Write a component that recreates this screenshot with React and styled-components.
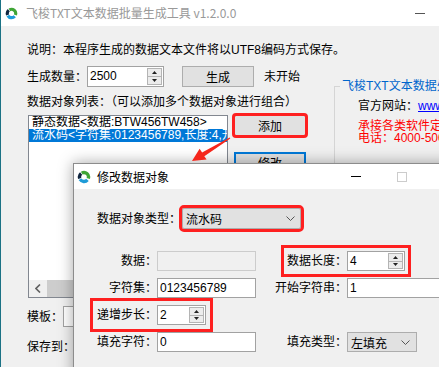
import React from "react";
import styled, { createGlobalStyle } from "styled-components";

const GlobalStyle = createGlobalStyle`
  html, body { margin: 0; padding: 0; background: #f0f0f0; }
  body {
    font-family: "Liberation Sans", "Noto Sans CJK SC", sans-serif;
    font-size: 12px;
    color: #000;
  }
  * { box-sizing: border-box; }
`;

const Desktop = styled.div`
  position: relative;
  width: 439px;
  height: 367px;
  overflow: hidden;
  background: #f0f0f0;
`;

const MainWindow = styled.div`
  width: 535px;
  height: 367px;
  border-left: 1px solid #1b7285;
  background: #f0f0f0;
`;

const TitleBar = styled.div`
  display: flex;
  align-items: center;
  height: ${(p) => p.$h}px;
  padding-left: ${(p) => p.$pad}px;
  background: #fff;
`;

const Title = styled.div`
  margin-left: ${(p) => p.$gap}px;
  flex: 1;
  color: ${(p) => (p.$active ? "#000" : "#999")};
  font-family: "Noto Sans CJK SC", sans-serif;
  font-size: 12px;
  line-height: 16px;
  white-space: nowrap;
`;

const CaptionButton = styled.div`
  width: 46px;
  height: 100%;
  display: flex;
  align-items: center;
  justify-content: center;
`;

const MinGlyph = styled.span`
  width: 10px;
  height: 1px;
  background: ${(p) => p.$color};
`;

const MaxGlyph = styled.span`
  width: 10px;
  height: 10px;
  border: 1px solid ${(p) => p.$color};
`;

const Client = styled.div`
  display: grid;
  grid-template-columns: 307px 1fr;
  padding: 16px 0 0 26px;
`;

const Note = styled.div`
  grid-column: 1 / -1;
  line-height: 16px;
  white-space: nowrap;
`;

const LeftPane = styled.div`
  display: flex;
  flex-direction: column;
  padding-top: 8px;
`;

const Row = styled.div`
  display: flex;
  align-items: center;
  height: ${(p) => p.$h || 21}px;
  margin-top: ${(p) => p.$top || 0}px;
  white-space: nowrap;
`;

const Text = styled.span`
  line-height: 16px;
  white-space: nowrap;
  margin-left: ${(p) => p.$gap || 0}px;
`;

const Label = styled.span`
  width: ${(p) => p.$w}px;
  flex: none;
  text-align: right;
  line-height: 16px;
  white-space: nowrap;
`;

const TextBox = styled.input`
  width: ${(p) => p.$w}px;
  height: ${(p) => p.$h || 20}px;
  flex: none;
  margin: 0;
  padding: 0 0 0 2px;
  font: inherit;
  font-size: 12px;
  color: #000;
  background: ${(p) => (p.disabled ? "#f0f0f0" : "#fff")};
  border: 1px solid ${(p) => (p.disabled ? "#cccccc" : "#a2a2a2")};
  border-radius: 0;
  outline: none;
`;

const SpinWrap = styled.div`
  display: flex;
  width: ${(p) => p.$w}px;
  height: ${(p) => p.$h || 20}px;
  flex: none;
  padding: 1px;
  background: #fff;
  border: 1px solid #a2a2a2;
`;

const SpinText = styled.span`
  flex: 1;
  padding-left: 1px;
  line-height: ${(p) => p.$h - 4}px;
`;

const Spinner = styled.div`
  display: flex;
  flex-direction: column;
  width: 15px;
  border: 1px solid #b4b4b4;
  background: #ececec;
`;

const SpinHalf = styled.div`
  flex: 1;
  display: flex;
  align-items: center;
  justify-content: center;
  border-top: ${(p) => (p.$lower ? "1px solid #b4b4b4" : "none")};
`;

const PushButton = styled.div`
  width: 72px;
  height: 21px;
  flex: none;
  display: flex;
  align-items: center;
  justify-content: center;
  background: #e1e1e1;
  border: 1px solid ${(p) => (p.$focus ? "#0078d7" : "#adadad")};
  box-shadow: ${(p) => (p.$focus ? "inset 0 0 0 1px #0078d7" : "none")};
  margin-top: ${(p) => p.$top || 0}px;
  margin-left: ${(p) => p.$left || 0}px;
  outline: ${(p) => (p.$mark ? "3px solid #fe2020" : "none")};
  outline-offset: -1px;
  border-radius: ${(p) => (p.$mark ? "2px" : "0")};
`;

const ListArea = styled.div`
  display: flex;
  align-items: flex-start;
  margin-top: 5px;
`;

const ListBox = styled.div`
  display: flex;
  flex-direction: column;
  width: 200px;
  height: 183px;
  margin-left: 1px;
  background: #fff;
  border: 1px solid #828790;
  overflow: hidden;
`;

const ListItem = styled.div`
  height: 13px;
  line-height: 13px;
  padding-left: 3px;
  white-space: nowrap;
  overflow: hidden;
  color: ${(p) => (p.$selected ? "#fff" : "#000")};
  background: ${(p) => (p.$selected ? "#0078d7" : "transparent")};
`;

const HScroll = styled.div`
  display: flex;
  height: 17px;
  margin-top: auto;
  background: #f0f0f0;
`;

const ScrollArrow = styled.div`
  width: 17px;
  display: flex;
  align-items: center;
  justify-content: center;
`;

const ScrollThumb = styled.div`
  width: 110px;
  margin: 0 0 0 1px;
  background: #cdcdcd;
`;

const ButtonColumn = styled.div`
  display: flex;
  flex-direction: column;
  margin-left: 6px;
`;

const InfoGroup = styled.fieldset`
  margin: 21px 0 0 0;
  padding: 0;
  min-height: 130px;
  border: 1px solid #d5d5d5;
`;

const GroupTitle = styled.legend`
  margin-left: 5px;
  padding: 0 2px;
  line-height: 14px;
  color: #0066cc;
  white-space: nowrap;
`;

const GroupBody = styled.div`
  padding: 6px 0 0 23px;
`;

const InfoLine = styled.div`
  line-height: ${(p) => p.$lh}px;
  color: ${(p) => p.$color || "#000"};
  white-space: nowrap;
`;

const Link = styled.span`
  color: #0000ff;
  text-decoration: underline;
`;

const InfoBlock = styled.div`
  margin-top: 7px;
`;

const Dialog = styled.div`
  position: absolute;
  left: 73px;
  top: 163px;
  width: 399px;
  height: 220px;
  z-index: 2;
  background: #f0f0f0;
  border: 1px solid #8c8c8c;
  box-shadow: 0 0 14px rgba(0, 0, 0, 0.35);
`;

const DialogBody = styled.div`
  padding: 19px 0 0 23px;
`;

const Dropdown = styled.div`
  width: ${(p) => p.$w}px;
  height: ${(p) => p.$h || 20}px;
  flex: none;
  display: flex;
  align-items: center;
  justify-content: space-between;
  padding: 0 ${(p) => p.$right || 5}px 0 3px;
  margin-left: ${(p) => p.$left || 0}px;
  background: #e1e1e1;
  border: 1px solid #adadad;
  outline: ${(p) => (p.$mark ? "3px solid #fe2020" : "none")};
  outline-offset: 0;
  border-radius: ${(p) => (p.$mark ? "2px" : "0")};
`;

const FieldGrid = styled.div`
  display: grid;
  grid-template-columns: 159px auto;
  grid-auto-rows: 20px;
  column-gap: 19px;
  row-gap: 7px;
  margin-top: 22px;
`;

const Field = styled.div`
  display: flex;
  align-items: center;
  width: fit-content;
  height: 20px;
  margin-left: ${(p) => p.$indent || 0}px;
  outline: ${(p) => (p.$mark ? "3px solid #fe2020" : "none")};
  outline-offset: ${(p) => p.$off || 0}px;
`;

const ArrowMark = styled.svg`
  position: absolute;
  left: 185px;
  top: 130px;
  z-index: 3;
  pointer-events: none;
`;

function AppIcon({ size }) {
  return (
    <svg width={size} height={size} viewBox="0 0 14 14">
      <path d="M4.75 3.1 A4.5 4.5 0 0 1 11.23 8.54" stroke="#3fa535" strokeWidth="3.4" fill="none" />
      <path d="M10.45 9.89 A4.5 4.5 0 0 1 3.1 9.25" stroke="#1e9bd7" strokeWidth="3.4" fill="none" />
      <path d="M2.77 8.54 A4.5 4.5 0 0 1 4.11 3.55" stroke="#10253f" strokeWidth="3.4" fill="none" />
    </svg>
  );
}

function Chevron() {
  return (
    <svg width="9" height="5" viewBox="0 0 9 5">
      <path d="M0.5 0.5 L4.5 4.5 L8.5 0.5" stroke="#555" strokeWidth="1" fill="none" />
    </svg>
  );
}

function SpinBox({ value, w, h = 20 }) {
  return (
    <SpinWrap $w={w} $h={h}>
      <SpinText $h={h}>{value}</SpinText>
      <Spinner>
        <SpinHalf>
          <svg width="5" height="3" viewBox="0 0 5 3"><path d="M0 3 L2.5 0 L5 3 Z" fill="#222" /></svg>
        </SpinHalf>
        <SpinHalf $lower>
          <svg width="5" height="3" viewBox="0 0 5 3"><path d="M0 0 L2.5 3 L5 0 Z" fill="#222" /></svg>
        </SpinHalf>
      </Spinner>
    </SpinWrap>
  );
}

function Captions({ active, maxDisabled }) {
  const ink = active ? "#000" : "#555";
  return (
    <>
      <CaptionButton><MinGlyph $color={ink} /></CaptionButton>
      <CaptionButton><MaxGlyph $color={maxDisabled ? "#cccccc" : ink} /></CaptionButton>
      <CaptionButton>
        <svg width="10" height="10" viewBox="0 0 10 10">
          <path d="M0 0 L10 10 M10 0 L0 10" stroke={ink} strokeWidth="1" />
        </svg>
      </CaptionButton>
    </>
  );
}

export default function App() {
  return (
    <Desktop>
      <GlobalStyle />
      <MainWindow>
        <TitleBar $h={26} $pad={4}>
          <AppIcon size={13} />
          <Title $gap={8}>飞梭TXT文本数据批量生成工具 v1.2.0.0</Title>
          <Captions />
        </TitleBar>
        <Client>
          <Note>说明：本程序生成的数据文本文件将以UTF8编码方式保存。</Note>
          <LeftPane>
            <Row>
              <Text>生成数量：</Text>
              <SpinBox value="2500" w={77} h={21} />
              <PushButton $left={18}>生成</PushButton>
              <Text $gap={10}>未开始</Text>
            </Row>
            <Row $h={16} $top={7}>
              <Text>数据对象列表：（可以添加多个数据对象进行组合）</Text>
            </Row>
            <ListArea>
              <ListBox>
                <ListItem>静态数据&lt;数据:BTW456TW458&gt;</ListItem>
                <ListItem $selected>流水码&lt;字符集:0123456789,长度:4,开始:1,步长:2&gt;</ListItem>
                <HScroll>
                  <ScrollArrow>
                    <svg width="6" height="9" viewBox="0 0 6 9">
                      <path d="M5 0.5 L1 4.5 L5 8.5" stroke="#606060" strokeWidth="1.6" fill="none" />
                    </svg>
                  </ScrollArrow>
                  <ScrollThumb />
                </HScroll>
              </ListBox>
              <ButtonColumn>
                <PushButton $mark>添加</PushButton>
                <PushButton $focus $top={16}>修改</PushButton>
              </ButtonColumn>
            </ListArea>
            <Row $top={8}>
              <Text>模板：</Text>
              <TextBox $w={200} $h={21} readOnly defaultValue="" />
            </Row>
            <Row $top={9}>
              <Text>保存到：</Text>
              <TextBox $w={200} $h={21} readOnly defaultValue="" />
            </Row>
          </LeftPane>
          <div>
            <InfoGroup>
              <GroupTitle>飞梭TXT文本数据处理工具</GroupTitle>
              <GroupBody>
                <InfoLine $lh={14}>
                  官方网站：<Link>www.feisuo.net</Link>
                </InfoLine>
                <InfoBlock>
                  <InfoLine $lh={12} $color="#ff0000">承接各类软件定制开发</InfoLine>
                  <InfoLine $lh={12} $color="#ff0000">电话：4000-500-000</InfoLine>
                </InfoBlock>
              </GroupBody>
            </InfoGroup>
          </div>
        </Client>
      </MainWindow>

      <ArrowMark width="50" height="40" viewBox="0 0 50 40">
        <polygon
          points="44.7,7.4 17.1,22.4 14.6,18.8 7,31 21.6,29.6 19.3,26.2 45.3,8.6"
          fill="#f5261b"
        />
      </ArrowMark>

      <Dialog>
        <TitleBar $h={25} $pad={3}>
          <AppIcon size={14} />
          <Title $gap={6} $active>修改数据对象</Title>
          <Captions active maxDisabled />
        </TitleBar>
        <DialogBody>
          <Row>
            <Text>数据对象类型：</Text>
            <Dropdown $w={119} $h={21} $left={1} $mark>
              <span>流水码</span>
              <Chevron />
            </Dropdown>
          </Row>
          <FieldGrid>
            <Field>
              <Label $w={60}>数据：</Label>
              <TextBox $w={99} disabled defaultValue="" />
            </Field>
            <Field $indent={12} $mark $off={3}>
              <Label $w={60}>数据长度：</Label>
              <SpinBox value="4" w={58} />
            </Field>
            <Field>
              <Label $w={60}>字符集：</Label>
              <TextBox $w={99} readOnly defaultValue="0123456789" />
            </Field>
            <Field>
              <Label $w={72}>开始字符串：</Label>
              <TextBox $w={99} readOnly defaultValue="1" />
            </Field>
            <Field $mark $off={4}>
              <Label $w={60}>递增步长：</Label>
              <SpinBox value="2" w={49} />
            </Field>
            <div />
            <Field>
              <Label $w={60}>填充字符：</Label>
              <TextBox $w={99} readOnly defaultValue="0" />
            </Field>
            <Field>
              <Label $w={72}>填充类型：</Label>
              <Dropdown $w={70} $right={6}>
                <span>左填充</span>
                <Chevron />
              </Dropdown>
            </Field>
          </FieldGrid>
        </DialogBody>
      </Dialog>
    </Desktop>
  );
}
